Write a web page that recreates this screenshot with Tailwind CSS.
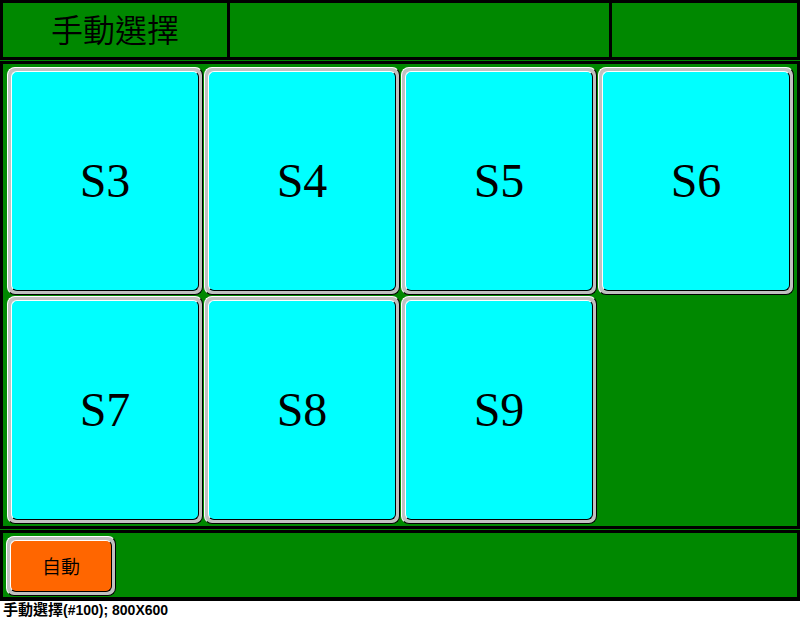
<!DOCTYPE html>
<html lang="zh-Hant">
<head>
<meta charset="utf-8">
<meta name="viewport" content="width=device-width, initial-scale=1">
<title>手動選擇</title>
<script src="https://cdn.jsdelivr.net/npm/@tailwindcss/browser@4"></script>
</head>
<body class="min-h-screen bg-white text-black">
<main class="flex flex-col bg-black pb-px font-['Liberation_Serif','Noto_Sans_CJK_TC',serif]">
  <header class="grid grid-cols-[224fr_379fr_185fr] gap-[3px] border-[3px] border-black">
    <h1 class="flex h-[54px] items-center justify-center bg-[#008800] pb-1 text-[32px] leading-8 font-['Noto_Sans_CJK_TC',sans-serif] font-[350]">手動選擇</h1>
    <div class="bg-[#008800]"></div>
    <div class="bg-[#008800]"></div>
  </header>
  <div class="h-px bg-[#008800]"></div>
  <section aria-label="手動選擇" class="border-[3px] border-black bg-[#008800] pt-[3px] pr-[3px] pb-[2px] pl-1">
    <div class="grid grid-cols-4 gap-px text-[48px] leading-[48px]">
      <button type="button" class="h-[228px] rounded-[8px] border border-t-white border-l-white border-r-black border-b-black bg-[#c0c0c0] p-[3px]"><span class="flex h-full items-center justify-center rounded-[6px] border border-t-white border-l-white border-r-black border-b-black bg-[#00ffff]">S3</span></button>
      <button type="button" class="h-[228px] rounded-[8px] border border-t-white border-l-white border-r-black border-b-black bg-[#c0c0c0] p-[3px]"><span class="flex h-full items-center justify-center rounded-[6px] border border-t-white border-l-white border-r-black border-b-black bg-[#00ffff]">S4</span></button>
      <button type="button" class="h-[228px] rounded-[8px] border border-t-white border-l-white border-r-black border-b-black bg-[#c0c0c0] p-[3px]"><span class="flex h-full items-center justify-center rounded-[6px] border border-t-white border-l-white border-r-black border-b-black bg-[#00ffff]">S5</span></button>
      <button type="button" class="h-[228px] rounded-[8px] border border-t-white border-l-white border-r-black border-b-black bg-[#c0c0c0] p-[3px]"><span class="flex h-full items-center justify-center rounded-[6px] border border-t-white border-l-white border-r-black border-b-black bg-[#00ffff]">S6</span></button>
      <button type="button" class="h-[228px] rounded-[8px] border border-t-white border-l-white border-r-black border-b-black bg-[#c0c0c0] p-[3px]"><span class="flex h-full items-center justify-center rounded-[6px] border border-t-white border-l-white border-r-black border-b-black bg-[#00ffff]">S7</span></button>
      <button type="button" class="h-[228px] rounded-[8px] border border-t-white border-l-white border-r-black border-b-black bg-[#c0c0c0] p-[3px]"><span class="flex h-full items-center justify-center rounded-[6px] border border-t-white border-l-white border-r-black border-b-black bg-[#00ffff]">S8</span></button>
      <button type="button" class="h-[228px] rounded-[8px] border border-t-white border-l-white border-r-black border-b-black bg-[#c0c0c0] p-[3px]"><span class="flex h-full items-center justify-center rounded-[6px] border border-t-white border-l-white border-r-black border-b-black bg-[#00ffff]">S9</span></button>
    </div>
  </section>
  <div class="h-px bg-[#008800]"></div>
  <nav class="flex border-[3px] border-black bg-[#008800] px-[3px] pt-[3px] pb-[1px]">
    <button type="button" class="h-[60px] w-[110px] rounded-[8px] border border-t-white border-l-white border-r-black border-b-black bg-[#c0c0c0] p-[3px]"><span class="flex h-full items-center justify-center rounded-[6px] border border-t-white border-l-white border-r-black border-b-black bg-[#ff6600] text-[19px] leading-5 font-['Noto_Sans_CJK_TC',sans-serif] font-[350]">自動</span></button>
  </nav>
</main>
<footer class="px-[3px] text-[14px] leading-[18px] font-bold font-['Liberation_Sans','Noto_Sans_CJK_TC',sans-serif]"><span class="text-[15px]">手動選擇</span>(#100); 800X600</footer>
</body>
</html>
